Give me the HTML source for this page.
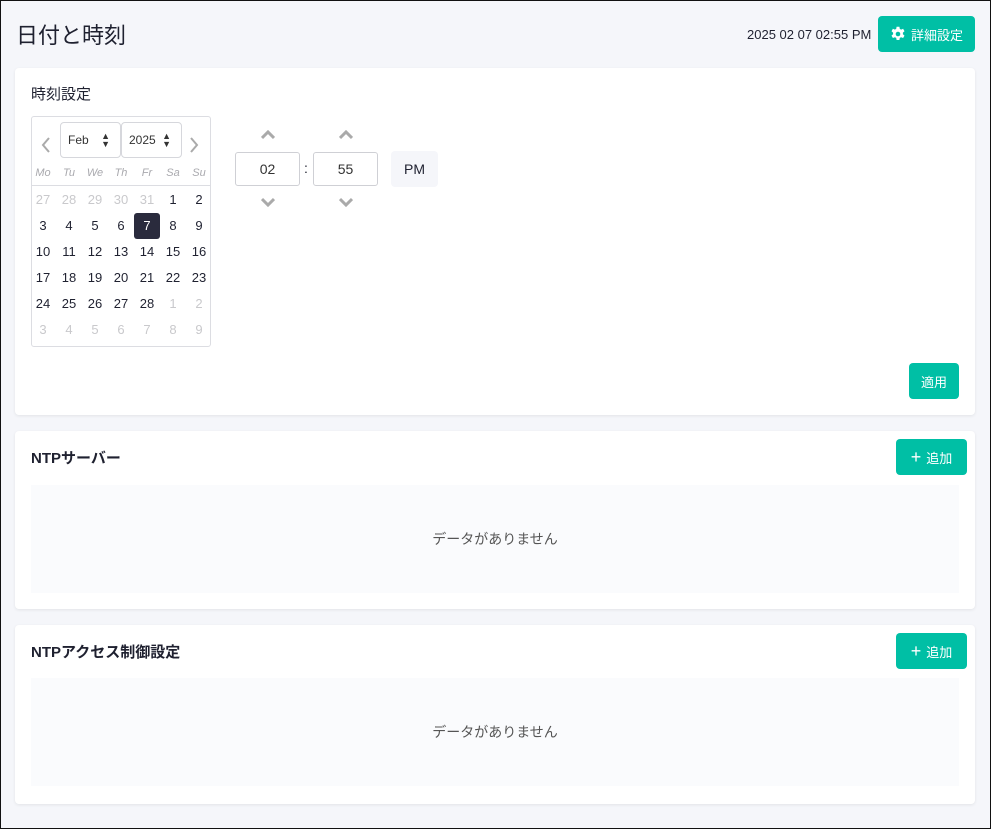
<!DOCTYPE html>
<html><head><meta charset="utf-8"><style>
*{box-sizing:border-box;margin:0;padding:0}
body{width:991px;height:829px;overflow:hidden;background:#f5f6fa;font-family:"Liberation Sans","Noto Sans CJK JP",sans-serif;color:#1f2130;position:relative}
.frame{position:absolute;left:0;top:0;width:991px;height:829px;border:1px solid #111;pointer-events:none;z-index:10}
.a{position:absolute}
.card{position:absolute;left:15px;width:960px;background:#fff;border-radius:4px;box-shadow:0 1px 3px rgba(0,0,0,.08)}
.btn{position:absolute;background:#00bfa5;color:#fff;border-radius:4px;font-size:13px;display:flex;align-items:center;justify-content:center}
.cal{left:31px;top:116px;width:180px;height:231px;border:1px solid #dcdde2;border-radius:3px}
.sel{position:absolute;top:5px;height:36px;border:1px solid #d6d7dc;border-radius:4px;font-size:12px;display:flex;align-items:center;padding-left:7px;color:#333}
.d{position:absolute;width:26px;height:26px;text-align:center;line-height:26px;font-size:13px}
.g{color:#c9c9cc}
.h{position:absolute;width:26px;text-align:center;font-size:11px;font-style:italic;color:#a9a9ae;top:50px}
.inp{position:absolute;top:152px;width:65px;height:34px;border:1px solid #cfd0d5;border-radius:3px;font-size:14px;text-align:center;line-height:32px;color:#333}
.empty{position:absolute;left:16px;width:928px;height:108px;background:#fafbfd;font-size:14px;color:#555;text-align:center;line-height:108px}
.ttl{position:absolute;left:16px;font-size:15px;font-weight:bold;color:#1f2130}
</style></head><body>
<div class="frame"></div>
<div class="a" style="left:16px;top:18px;font-size:22px;color:#1f2130">日付と時刻</div>
<div class="a" style="left:747px;top:27px;font-size:13px">2025 02 07 02:55 PM</div>
<div class="btn" style="left:878px;top:16px;width:97px;height:36px;font-size:13px">
<svg width="16" height="16" viewBox="0 0 16 16" style="margin-right:5px"><path fill="#fff" d="M6.6 .8h2.8l.4 2.1 1.3.7 2-.8 1.4 2.4-1.6 1.4v1.6l1.6 1.4-1.4 2.4-2-.8-1.3.7-.4 2.1H6.6l-.4-2.1-1.3-.7-2 .8-1.4-2.4 1.6-1.4V6.6L1.5 5.2l1.4-2.4 2 .8 1.3-.7z"/><circle cx="8" cy="8" r="2.3" fill="#00bfa5"/></svg>詳細設定</div>

<div class="card" style="top:68px;height:347px">
<div class="ttl" style="top:15px;font-weight:normal;font-size:15px">時刻設定</div>
</div>
<div class="a cal">
<svg class="a" style="left:9px;top:20px" width="10" height="16" viewBox="0 0 10 16"><path d="M8 1L2 8l6 7" fill="none" stroke="#aaa" stroke-width="2"/></svg>
<svg class="a" style="left:157px;top:20px" width="10" height="16" viewBox="0 0 10 16"><path d="M2 1l6 7-6 7" fill="none" stroke="#aaa" stroke-width="2"/></svg>
<div class="sel" style="left:28px;width:61px">Feb<span style="position:absolute;right:10px;font-size:9px;line-height:8px">▲<br>▼</span></div>
<div class="sel" style="left:89px;width:61px">2025<span style="position:absolute;right:10px;font-size:9px;line-height:8px">▲<br>▼</span></div>
<div class="h" style="left:-2px">Mo</div><div class="h" style="left:24px">Tu</div><div class="h" style="left:50px">We</div><div class="h" style="left:76px">Th</div><div class="h" style="left:102px">Fr</div><div class="h" style="left:128px">Sa</div><div class="h" style="left:154px">Su</div>
<div class="a" style="left:0;top:68px;width:178px;border-top:1px solid #dcdde2"></div>
</div>
<svg class="a" style="left:261px;top:130px" width="14" height="10" viewBox="0 0 14 10"><path d="M1 8l6-6 6 6" fill="none" stroke="#aaa" stroke-width="3"/></svg>
<svg class="a" style="left:339px;top:130px" width="14" height="10" viewBox="0 0 14 10"><path d="M1 8l6-6 6 6" fill="none" stroke="#aaa" stroke-width="3"/></svg>
<div class="inp" style="left:235px">02</div>
<div class="a" style="left:304px;top:160px;font-size:14px">:</div>
<div class="inp" style="left:313px">55</div>
<div class="a" style="left:391px;top:151px;width:47px;height:36px;background:#f5f6fa;border-radius:4px;font-size:14px;text-align:center;line-height:36px">PM</div>
<svg class="a" style="left:261px;top:197px" width="14" height="10" viewBox="0 0 14 10"><path d="M1 2l6 6 6-6" fill="none" stroke="#aaa" stroke-width="3"/></svg>
<svg class="a" style="left:339px;top:197px" width="14" height="10" viewBox="0 0 14 10"><path d="M1 2l6 6 6-6" fill="none" stroke="#aaa" stroke-width="3"/></svg>
<div class="btn" style="left:909px;top:363px;width:50px;height:36px">適用</div>

<div class="card" style="top:431px;height:178px">
<div class="ttl" style="top:16px">NTPサーバー</div>
<div class="empty" style="top:54px">データがありません</div>
</div>
<div class="btn" style="left:896px;top:439px;width:71px;height:36px"><span style="font-size:18px;margin-right:5px">+</span>追加</div>

<div class="card" style="top:625px;height:179px">
<div class="ttl" style="top:16px">NTPアクセス制御設定</div>
<div class="empty" style="top:53px">データがありません</div>
</div>
<div class="btn" style="left:896px;top:633px;width:71px;height:36px"><span style="font-size:18px;margin-right:5px">+</span>追加</div>

<div style="position:absolute;left:0;top:1px">
<div class="d g" style="left:30px;top:186px">27</div><div class="d g" style="left:56px;top:186px">28</div><div class="d g" style="left:82px;top:186px">29</div><div class="d g" style="left:108px;top:186px">30</div><div class="d g" style="left:134px;top:186px">31</div><div class="d" style="left:160px;top:186px">1</div><div class="d" style="left:186px;top:186px">2</div>
<div class="d" style="left:30px;top:212px">3</div><div class="d" style="left:56px;top:212px">4</div><div class="d" style="left:82px;top:212px">5</div><div class="d" style="left:108px;top:212px">6</div><div class="d" style="left:134px;top:212px;background:#2a2b3d;color:#fff;border-radius:3px">7</div><div class="d" style="left:160px;top:212px">8</div><div class="d" style="left:186px;top:212px">9</div>
<div class="d" style="left:30px;top:238px">10</div><div class="d" style="left:56px;top:238px">11</div><div class="d" style="left:82px;top:238px">12</div><div class="d" style="left:108px;top:238px">13</div><div class="d" style="left:134px;top:238px">14</div><div class="d" style="left:160px;top:238px">15</div><div class="d" style="left:186px;top:238px">16</div>
<div class="d" style="left:30px;top:264px">17</div><div class="d" style="left:56px;top:264px">18</div><div class="d" style="left:82px;top:264px">19</div><div class="d" style="left:108px;top:264px">20</div><div class="d" style="left:134px;top:264px">21</div><div class="d" style="left:160px;top:264px">22</div><div class="d" style="left:186px;top:264px">23</div>
<div class="d" style="left:30px;top:290px">24</div><div class="d" style="left:56px;top:290px">25</div><div class="d" style="left:82px;top:290px">26</div><div class="d" style="left:108px;top:290px">27</div><div class="d" style="left:134px;top:290px">28</div><div class="d g" style="left:160px;top:290px">1</div><div class="d g" style="left:186px;top:290px">2</div>
<div class="d g" style="left:30px;top:316px">3</div><div class="d g" style="left:56px;top:316px">4</div><div class="d g" style="left:82px;top:316px">5</div><div class="d g" style="left:108px;top:316px">6</div><div class="d g" style="left:134px;top:316px">7</div><div class="d g" style="left:160px;top:316px">8</div><div class="d g" style="left:186px;top:316px">9</div>
</div>
</body></html>
